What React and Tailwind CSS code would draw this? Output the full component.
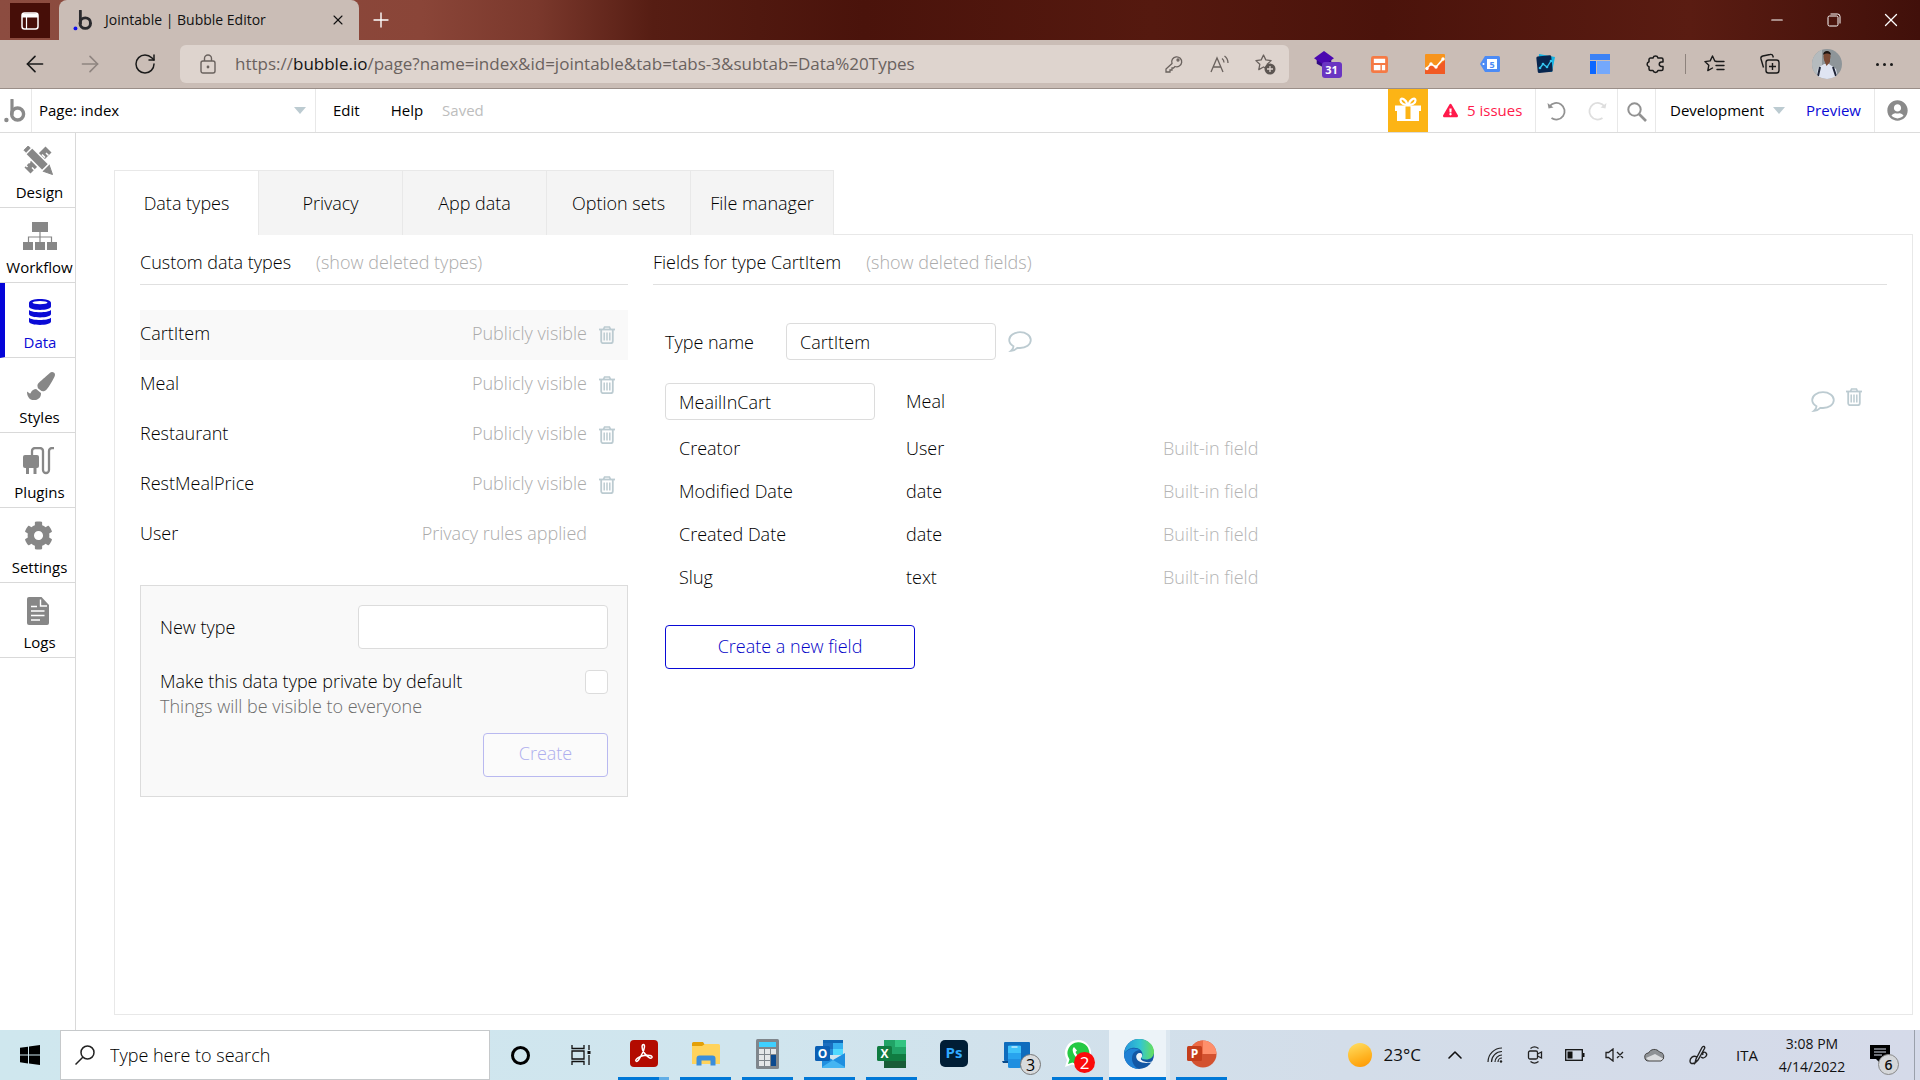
import React from "react";
import { FaCog, FaPaintBrush, FaUserCircle, FaExclamationTriangle } from "react-icons/fa";
import { ArrowLeft, ArrowRight, RotateCw, X, Plus, Minus, ChevronUp } from "lucide-react";

function BubbleMark({ className, dot }) {
  return (
    <svg viewBox="0 0 22 24" className={className} aria-hidden="true">
      <path d="M8 1v14" stroke="currentColor" strokeWidth="3.2" fill="none" strokeLinecap="round" />
      <circle cx="13.6" cy="15" r="6" stroke="currentColor" strokeWidth="3.4" fill="none" />
      <circle cx="2.4" cy="21" r="2.2" fill={dot} />
    </svg>
  );
}

function Caret() {
  return (
    <svg viewBox="0 0 12 7" className="pointer-events-none h-[7px] w-3 shrink-0 fill-[#bccbd1]" aria-hidden="true">
      <path d="M0 0h12L6 7z" />
    </svg>
  );
}

function TrashIcon({ className = "h-[18px] w-4" }) {
  return (
    <svg viewBox="0 0 16 18" className={className} fill="none" stroke="#bccbd1" aria-hidden="true">
      <path d="M0 3.5h16" strokeWidth="1.8" />
      <path d="M4.6 3.2 5.6 1h4.8l1 2.2" strokeWidth="1.7" />
      <path d="M2.2 4v11.2a2 2 0 0 0 2 2h7.6a2 2 0 0 0 2-2V4" strokeWidth="1.8" />
      <path d="M5.2 6.5v8M8 6.5v8M10.8 6.5v8" strokeWidth="1.5" />
    </svg>
  );
}

function CommentIcon() {
  return (
    <svg viewBox="0 0 24 21" className="h-[21px] w-6" fill="none" stroke="#bccbd1" strokeWidth="1.8" aria-hidden="true">
      <path d="M5.5 15.2C2.800 13.800 1.200 11.600 1.200 9.100 1.200 4.700 6 1.200 12 1.200s10.800 3.500 10.800 7.900S18 17 12 17c-1 0-1.900-.1-2.700-.2-1.600 1.700-3.600 2.800-6.200 3 1.400-1.100 2.300-2.500 2.400-4.600z" />
    </svg>
  );
}

/* ---------- Browser frame ---------- */

function TitleBar() {
  return (
    <header className="flex h-10 items-start bg-[linear-gradient(90deg,#8c4c40_0%,#8a4538_22%,#7a382c_28%,#561d13_34%,#4a130b_45%,#55190f_60%,#4b130b_72%,#5a1c12_88%,#41100a_100%)] text-white">
      <button className="mt-[3px] ml-[10px] flex h-[35px] w-10 items-center justify-center bg-[#460e08]" aria-label="Tab actions menu">
        <svg viewBox="0 0 18 18" className="size-[18px]" fill="none" stroke="white" strokeWidth="1.5">
          <rect x="1" y="1" width="16" height="16" rx="2.500" />
          <path d="M1 3.500h16" strokeWidth="4" />
          <path d="M5.500 5v12" strokeWidth="1.200" />
        </svg>
      </button>
      <div className="ml-[9px] flex h-10 w-[300px] items-center rounded-t-lg bg-[#cabdb6] pr-[13px] pl-[14px] text-[#111]">
        <BubbleMark className="h-[21px] w-5 text-[#2a2a2e]" dot="#1010ee" />
        <span className="ml-3 flex-1 text-sm whitespace-nowrap">Jointable | Bubble Editor</span>
        <button aria-label="Close tab"><X className="size-4" strokeWidth={1.600} /></button>
      </div>
      <button className="ml-[10px] flex h-10 items-center" aria-label="New tab"><Plus className="size-6" strokeWidth={1.400} /></button>
      <div className="ml-auto flex h-10">
        <button className="flex w-[57px] items-center justify-center" aria-label="Minimize"><Minus className="size-[18px]" strokeWidth={1.500} /></button>
        <button className="flex w-[57px] items-center justify-center" aria-label="Restore">
          <svg viewBox="0 0 14 14" className="size-[14px]" fill="none" stroke="white"><rect x="1" y="3" width="10" height="10" rx="1.500" /><path d="M3.500 1h7a2.500 2.500 0 0 1 2.500 2.500v7" /></svg>
        </button>
        <button className="mr-px flex w-[57px] items-center justify-center" aria-label="Close"><X className="size-[22px]" strokeWidth={1.400} /></button>
      </div>
    </header>
  );
}

const extensions = [
  ["Calendar", (
    <span className="relative ml-[6px] block h-8 w-7">
      <svg viewBox="0 0 22 20" className="mt-[2px] h-5 w-5"><path d="M3 8h16v6l-7 5-9-5z" fill="#2f0a80" /><path d="M11 0l11 8-11 7.500L0 8z" fill="#4b08b0" /></svg>
      <span className="absolute top-[14px] left-2 flex h-4 w-5 items-center justify-center rounded-[3px] bg-[#6a35c2] text-[11px] font-bold text-white">31</span>
    </span>
  )],
  ["Layout", (
    <svg viewBox="0 0 18 18" className="size-[17px]"><rect width="18" height="18" rx="2.500" fill="#f57a45" /><path d="M3 3h12v4.500H3zM3 9.500h7V15H3zM11.500 9.500H15V15h-3.500z" fill="#fff" /></svg>
  )],
  ["Trends", (
    <svg viewBox="0 0 20 20" className="size-5"><rect width="20" height="20" rx="1" fill="#f7941d" /><path d="M0 16l6-5 5 3 9-8v14H0z" fill="#f15a24" /><path d="M1 15l5-5 5 3 7-8" stroke="#fff" strokeWidth="1.600" fill="none" /><g fill="#fff"><circle cx="2" cy="14.500" r="1.700" /><circle cx="6" cy="10" r="1.700" /><circle cx="11" cy="13" r="1.700" /><circle cx="18" cy="5" r="1.700" /></g></svg>
  )],
  ["Tag assistant", (
    <svg viewBox="0 0 20 16" className="h-4 w-5"><path d="M5 0h13.500A1.500 1.500 0 0 1 20 1.500v13a1.500 1.500 0 0 1-1.500 1.500H5L0 8z" fill="#4c8bf5" /><rect x="7" y="3" width="10" height="10" fill="#fff" /><text x="12" y="11.500" fontSize="9" fontWeight="700" textAnchor="middle" fill="#4c8bf5">5</text><circle cx="3.500" cy="8" r="1" fill="#fff" /></svg>
  )],
  ["Analytics", (
    <svg viewBox="0 0 20 20" className="size-5"><path d="M4 0l16 3-3 15-14-1z" fill="#14b4e4" /><rect x="2" y="2" width="15" height="16.500" rx="1.500" transform="rotate(-6 9 10)" fill="#08264f" /><path d="M5 14l3-4 4 3 4-6" stroke="#35c5f0" strokeWidth="1.300" fill="none" /><g fill="#35c5f0"><circle cx="5" cy="14" r="1.300" /><circle cx="8" cy="10" r="1.300" /><circle cx="12" cy="13" r="1.300" /><circle cx="16" cy="7" r="1.300" /></g></svg>
  )],
  ["Board", (
    <svg viewBox="0 0 20 20" className="size-5"><path d="M0 0h20v6H0z" fill="#3b82f6" /><path d="M0 7h6v13H0z" fill="#0b66ff" /><path d="M7 7h13v13H7z" fill="#74a8fb" /></svg>
  )],
  ["Extensions", (
    <svg viewBox="0 0 20 20" className="size-5" fill="none" stroke="#1a1a1a" strokeWidth="1.500" strokeLinejoin="round"><path d="M5.500 4H8a2.600 2.600 0 0 1 5 0h3.500a1.500 1.500 0 0 1 1.500 1.500V8h-1.500a2 2 0 0 0 0 4.500H18V15a1.500 1.500 0 0 1-1.500 1.500H13a2.600 2.600 0 0 1-5 0H5.500A1.500 1.500 0 0 1 4 15v-2.200a2.600 2.600 0 0 1 0-5V5.500A1.500 1.500 0 0 1 5.500 4z" /></svg>
  )],
];

const star = "M9.500 2l2.300 4.900 5.300.7-3.900 3.700 1 5.300-4.700-2.600-4.700 2.600 1-5.300L1.900 7.600l5.300-.7z";

function Toolbar() {
  return (
    <nav className="flex h-[49px] items-center border-b border-[#9a8e88] bg-[#cabdb6] pr-2 text-[#1a1a1a]" aria-label="Browser toolbar">
      <button className="ml-[22px]" aria-label="Back"><ArrowLeft className="size-[26px]" strokeWidth={1.500} /></button>
      <button className="ml-[29px] text-[#8f8580]" aria-label="Forward"><ArrowRight className="size-[26px]" strokeWidth={1.500} /></button>
      <button className="ml-[30px]" aria-label="Refresh"><RotateCw className="size-6" strokeWidth={1.500} /></button>
      <div className="ml-[23px] flex h-[38px] min-w-0 flex-1 items-center rounded-md bg-[#ded4ce] pr-[13px] pl-5 text-[#6a625e]">
        <svg viewBox="0 0 16 20" className="h-5 w-4 shrink-0" fill="none" stroke="currentColor" strokeWidth="1.400"><rect x="1" y="7" width="14" height="12" rx="2" /><path d="M4.500 7V4.500a3.500 3.500 0 0 1 7 0V7" /><circle cx="8" cy="13" r=".7" fill="currentColor" /></svg>
        <span className="ml-[19px] min-w-0 flex-1 truncate text-[17px]">https://<span className="text-[#111]">bubble.io</span>/page?name=index&amp;id=jointable&amp;tab=tabs-3&amp;subtab=Data%20Types</span>
        <button className="ml-4" aria-label="Saved passwords">
          <svg viewBox="0 0 18 18" className="size-[18px]" fill="none" stroke="currentColor" strokeWidth="1.300"><path d="M7 8.500a5 5 0 1 1 3 3L8.500 13H7v2H5v2H1v-3z" /><circle cx="13" cy="5" r="1" /></svg>
        </button>
        <button className="ml-[27px]" aria-label="Read aloud">
          <svg viewBox="0 0 20 18" className="h-[18px] w-5" fill="none" stroke="currentColor" strokeWidth="1.300"><path d="M1 17L7 3l6 14M3.500 12h7M12 3.500a5 5 0 0 1 2 4M14.500 1a9 9 0 0 1 3.500 7" /></svg>
        </button>
        <button className="ml-6" aria-label="Add to favorites">
          <svg viewBox="0 0 22 22" className="size-[22px]" fill="none" stroke="currentColor" strokeWidth="1.300"><path d={star} strokeLinejoin="round" /><circle cx="16" cy="16" r="5.500" fill="#5d5652" stroke="none" /><path d="M16 13v6M13 16h6" stroke="#ded4ce" /></svg>
        </button>
      </div>
      <div className="ml-2 flex items-center">
        {extensions.map(([name, icon]) => (
          <button key={name} className="flex w-[55px] items-center justify-center" aria-label={name}>{icon}</button>
        ))}
        <span className="ml-[3px] h-5 w-px bg-[#8d827c]" />
        <button className="flex w-14 items-center justify-center" aria-label="Favorites">
          <svg viewBox="0 0 22 20" className="h-5 w-[22px]" fill="none" stroke="currentColor" strokeWidth="1.400" strokeLinejoin="round" strokeLinecap="round"><path d="M13.500 7.500L11.800 7 9.500 2 7.200 6.900l-5.300.7 3.900 3.700-1 5.300 4.700-2.600M14 7.500h7M13 11.500h8M14 15.500h7" /></svg>
        </button>
        <button className="flex w-14 items-center justify-center" aria-label="Collections">
          <svg viewBox="0 0 22 22" className="size-[22px]" fill="none" stroke="currentColor" strokeWidth="1.400"><rect x="7" y="7" width="13" height="13" rx="2.500" /><path d="M13.500 10v7M10 13.500h7M4.500 14.500L2 6a2.500 2.500 0 0 1 1.800-3L11 1.500a2.500 2.500 0 0 1 3 1.800l.3 1.200" /></svg>
        </button>
        <button className="flex w-[58px] items-center justify-center" aria-label="Profile">
          <svg viewBox="0 0 30 30" className="size-[30px]">
            <clipPath id="avatar"><circle cx="15" cy="15" r="15" /></clipPath>
            <g clipPath="url(#avatar)">
              <rect width="30" height="30" fill="#8e9599" /><path d="M0 0h10v30H0z" fill="#b5bbbe" />
              <path d="M4 30l2-11 6-4h5l7 5 2 10z" fill="#dfe4f2" />
              <path d="M12 11l2.500 6 3.500-4v-4h-6z" fill="#7a4a35" /><ellipse cx="15" cy="7.500" rx="3.500" ry="5" fill="#7a4a35" />
              <path d="M11 6c0-5.500 8-5.500 8 0-2-2-6-2-8 0z" fill="#1d1512" />
              <path d="M8 18l-2 9M21 18l3 9" stroke="#1f2537" strokeWidth="2" />
            </g>
          </svg>
        </button>
        <button className="flex w-14 items-center justify-center gap-1" aria-label="Settings and more">
          <span className="size-[3px] rounded-full bg-[#1a1a1a]" /><span className="size-[3px] rounded-full bg-[#1a1a1a]" /><span className="size-[3px] rounded-full bg-[#1a1a1a]" />
        </button>
      </div>
    </nav>
  );
}

/* ---------- Editor ---------- */

function EditorBar() {
  return (
    <div className="flex h-11 items-stretch border-b border-[#dcdcdc] bg-white text-[15px] text-black">
      <a href="#home" className="flex w-8 items-center border-r border-[#e8e8e8] pl-1" aria-label="Bubble home">
        <BubbleMark className="h-6 w-[22px] text-[#8a8a8a]" dot="#8a8a8a" />
      </a>
      <div className="flex w-[284px] items-center border-r border-[#e8e8e8] pr-[9px] pl-[7px]">
        <select aria-label="Page" className="h-full flex-1 appearance-none bg-transparent"><option>Page: index</option></select>
        <Caret />
      </div>
      <button className="ml-[17px]">Edit</button>
      <button className="ml-[31px]">Help</button>
      <span className="ml-[19px] flex items-center text-[#bdbdbd]">Saved</span>
      <div className="ml-auto flex items-stretch">
        <button className="flex w-10 items-center justify-center bg-[#fcb415]" aria-label="Gift">
          <svg viewBox="0 0 26 24" className="mb-[3px] h-6 w-[26px]" fill="white">
            <path d="M0 8.500h26V14H0zM2 14h22v10H2z" />
            <path d="M12.500 8C11 2 5.500-.5 5.500 3.500c0 3 4 4.500 7 4.500zM13.500 8c1.500-6 7-8.500 7-4.500 0 3-4 4.500-7 4.500z" fill="none" stroke="white" strokeWidth="2.200" />
            <path d="M10.500 9.500h5V22h-5z" fill="#fcb415" />
          </svg>
        </button>
        <button className="flex w-[108px] items-center gap-[9px] border-r border-[#e8e8e8] pl-[15px] whitespace-nowrap text-[#ff1a4b]">
          <FaExclamationTriangle className="size-[15px]" />5 issues
        </button>
        <div className="flex w-[82px] items-center justify-between border-r border-[#e8e8e8] pr-[10px] pl-[11px]">
          <button aria-label="Undo">
            <svg viewBox="0 0 20 20" className="size-5" fill="none" stroke="#929292" strokeWidth="1.800"><path d="M2.500 5.500A8.300 8.300 0 1 1 4.500 17" /><path d="M.5 2l1 5.500 5-1z" fill="#929292" stroke="none" /></svg>
          </button>
          <button aria-label="Redo">
            <svg viewBox="0 0 20 20" className="size-5" fill="none" stroke="#dedede" strokeWidth="1.800"><path d="M17.500 5.500A8.300 8.300 0 1 0 15.500 17" /><path d="M19.500 2l-1 5.500-5-1z" fill="#dedede" stroke="none" /></svg>
          </button>
        </div>
        <button className="flex w-[38px] items-center justify-center border-r border-[#e8e8e8]" aria-label="Search">
          <svg viewBox="0 0 20 20" className="mt-[3px] ml-px size-5" fill="none" stroke="#929292"><circle cx="7.500" cy="7.500" r="6.200" strokeWidth="2" /><path d="M12 12l7 7" strokeWidth="2.600" /></svg>
        </button>
        <div className="flex items-center gap-1 pl-[14px]">
          <select aria-label="Version" className="h-full w-[99px] appearance-none bg-transparent"><option>Development</option></select>
          <Caret />
        </div>
        <a href="#preview" className="flex w-[90px] items-center justify-end border-r border-[#e8e8e8] pr-[13px] text-[#0a0ad6]">Preview</a>
        <button className="flex w-[45px] items-center justify-center pr-px" aria-label="Account"><FaUserCircle className="size-[21px] text-[#8a8a8a]" /></button>
      </div>
    </div>
  );
}

const sections = [
  ["Design", (
    <svg viewBox="0 0 30 30" className="mr-[3px] size-[30px]">
      <path d="M4.500 25.500l21-21" stroke="currentColor" strokeWidth="8.500" />
      <path d="M1 18.500l3.500 3.500M5 16l2 2M11.500 25l-2.500-2.500M22 12.500l-3-3M25.500 10.500L23 8" stroke="white" strokeWidth="1.500" />
      <path d="M3.500 3.500L22 22" stroke="white" strokeWidth="11" />
      <path d="M5.500 5.500L22 22" stroke="currentColor" strokeWidth="8" />
      <path d="M1 5.200L5.200 1l2 2L3 7.200zM26 19.500l3.500 10-10-3.500z" fill="currentColor" stroke="currentColor" strokeWidth="1" />
      <path d="M2.500 9.500l7-7M18.500 26.500l8-8" stroke="white" strokeWidth="1.200" />
    </svg>
  )],
  ["Workflow", (
    <svg viewBox="0 0 34 28" className="h-7 w-[34px]" fill="currentColor"><path d="M9 0h16v10H9zM0 20h10v8H0zM12 20h10v8H12zM24 20h10v8H24z" /><path d="M17 10v10M5.500 20v-5h23v5" fill="none" stroke="currentColor" strokeWidth="1.200" /></svg>
  )],
  ["Data", (
    <svg viewBox="0 0 22 26" className="h-[26px] w-[22px]" fill="currentColor">
      <path d="M0 4c0-5.300 22-5.300 22 0v3.500c0 4.500-22 4.500-22 0z" /><ellipse cx="11" cy="3.600" rx="7.500" ry="1.700" fill="white" />
      <path d="M0 11c3 3 19 3 22 0v4c0 4.500-22 4.500-22 0zM0 18.700c3 3 19 3 22 0v3.800c0 4.500-22 4.500-22 0z" />
    </svg>
  )],
  ["Styles", <FaPaintBrush className="ml-[2px] size-7" />],
  ["Plugins", (
    <svg viewBox="0 0 32 28" className="mr-[2px] h-7 w-8" fill="currentColor"><rect y="8" width="16" height="13" rx="2" /><path d="M3 20h3v7H3zM10.500 20h3v7h-3z" /><path d="M9 9V4a3 3 0 0 1 3-3h5a3 3 0 0 1 3 3v19a3 3 0 0 0 6 0V4a3 3 0 0 1 3-3h2" fill="none" stroke="currentColor" strokeWidth="2.300" /></svg>
  )],
  ["Settings", <FaCog className="mr-[2px] size-[29px]" />],
  ["Logs", (
    <svg viewBox="0 0 22 28" className="mr-1 h-7 w-[22px]"><path d="M2 0h12.500L22 8v18a2 2 0 0 1-2 2H2a2 2 0 0 1-2-2V2a2 2 0 0 1 2-2z" fill="currentColor" /><path d="M13.500 2.500V9H20M4 9.500h6M4 14h13.500M4 18.500h13.500M4 23h9" stroke="white" strokeWidth="1.400" fill="none" /></svg>
  )],
];

function Sidebar() {
  return (
    <nav className="w-[76px] shrink-0 border-r border-[#d9d9d9] bg-white" aria-label="Editor sections">
      {sections.map(([name, icon]) => {
        const active = name === "Data";
        return (
          <a key={name} href={"#" + name.toLowerCase()} className={"flex h-[75px] flex-col items-center border-b border-[#d9d9d9] " + (active ? "border-l-[5px] border-l-[#0404d8] text-[#0a0ad6]" : "pl-1 text-[#878787]")}>
            <span className="flex h-[47px] items-end justify-center pb-[5px]">{icon}</span>
            <span className={"text-[15px] leading-6 " + (active ? "" : "text-black")}>{name}</span>
          </a>
        );
      })}
    </nav>
  );
}

const tabs = ["Data types", "Privacy", "App data", "Option sets", "File manager"];
const types = [
  ["CartItem", "Publicly visible"],
  ["Meal", "Publicly visible"],
  ["Restaurant", "Publicly visible"],
  ["RestMealPrice", "Publicly visible"],
  ["User", "Privacy rules applied"],
];
const builtIn = [["Creator", "User"], ["Modified Date", "date"], ["Created Date", "date"], ["Slug", "text"]];

function TypesColumn() {
  return (
    <section className="w-[488px] shrink-0">
      <div className="flex h-[50px] items-center gap-[25px] border-b border-[#e0e0e0] pt-[6px]">
        <h2>Custom data types</h2>
        <button className="text-[#ababab]">(show deleted types)</button>
      </div>
      <ul className="mt-[25px]">
        {types.map(([name, status], i) => (
          <li key={name} className={"flex h-[50px] items-center pr-[13px] " + (i === 0 ? "bg-[#f9f9f9]" : "")}>
            <button className="flex-1 pb-1 text-left">{name}</button>
            <span className="pb-1 text-[#ababab]">{status}</span>
            {i < 4 ? <button className="ml-3" aria-label={"Delete " + name}><TrashIcon /></button> : <span className="ml-3 w-4" />}
          </li>
        ))}
      </ul>
      <form className="mt-[25px] border border-[#dcdcdc] bg-[#f9f9f9] p-[19px]">
        <div className="flex items-center justify-between">
          <label htmlFor="new-type">New type</label>
          <input id="new-type" type="text" className="h-11 w-[250px] rounded border border-[#dcdcdc] bg-white px-3" />
        </div>
        <div className="mt-5 flex items-start justify-between leading-[25px]">
          <div>
            <label htmlFor="private" className="block">Make this data type private by default</label>
            <p className="text-[#6c6c6c]">Things will be visible to everyone</p>
          </div>
          <input id="private" type="checkbox" className="mt-px h-6 w-[23px] appearance-none rounded border border-[#dcdcdc] bg-white" />
        </div>
        <div className="mt-[14px] flex justify-end">
          <button type="button" disabled className="h-11 w-[125px] rounded border border-[#b9b9f0] bg-[#fbfbfb] pb-[3px] text-[#aeaeee]">Create</button>
        </div>
      </form>
    </section>
  );
}

function FieldsColumn() {
  return (
    <section className="min-w-0 flex-1">
      <div className="flex h-[50px] items-center gap-[25px] border-b border-[#e0e0e0] pt-[6px]">
        <h2>Fields for type CartItem</h2>
        <button className="text-[#ababab]">(show deleted fields)</button>
      </div>
      <div className="pt-[38px] pr-[25px] pl-3">
        <div className="flex items-center">
          <label htmlFor="type-name" className="w-[121px] pt-px">Type name</label>
          <input id="type-name" type="text" defaultValue="CartItem" className="h-[37px] w-[210px] rounded border border-[#dcdcdc] px-[13px]" />
          <button className="ml-3" aria-label="Comment on type"><CommentIcon /></button>
        </div>
        <table className="mt-[23px] w-full table-fixed text-left">
          <tbody>
            <tr className="h-11 align-top">
              <td className="w-[241px]"><input type="text" aria-label="Field name" defaultValue="MeailInCart" className="h-[37px] w-[210px] rounded border border-[#dcdcdc] px-[13px]" /></td>
              <td className="w-[257px] pt-[5px]">Meal</td>
              <td>
                <div className="flex justify-end gap-[11px] pt-[5px]">
                  <button className="pt-[3px]" aria-label="Comment on field"><CommentIcon /></button>
                  <button className="pb-[6px]" aria-label="Delete field"><TrashIcon /></button>
                </div>
              </td>
            </tr>
            {builtIn.map(([name, type]) => (
              <tr key={name} className="h-[43px]">
                <td className="pl-[14px]">{name}</td>
                <td>{type}</td>
                <td className="text-[#b4b4b4]">Built-in field</td>
              </tr>
            ))}
          </tbody>
        </table>
        <button className="mt-[26px] h-11 w-[250px] rounded border border-[#0a0ad6] pb-[2px] text-[#0404c8]">Create a new field</button>
      </div>
    </section>
  );
}

function DataPanel() {
  return (
    <main className="flex min-w-0 flex-1 flex-col bg-white pt-[37px] pr-[7px] pb-[15px] pl-[38px] text-[18px] font-light text-black">
      <div className="flex h-[65px]">
        {tabs.map((tab, i) => (
          <button key={tab} className={"w-[144px] border-t border-l border-[#e8e8e8] whitespace-nowrap last-of-type:border-r " + (i === 0 ? "bg-white" : "bg-[#f4f4f4]")}>{tab}</button>
        ))}
        <div className="flex-1 border-b border-[#e8e8e8]" />
      </div>
      <div className="flex flex-1 gap-[25px] border-r border-b border-l border-[#e8e8e8] px-[25px]">
        <TypesColumn />
        <FieldsColumn />
      </div>
    </main>
  );
}

/* ---------- Taskbar ---------- */

function OfficeTile({ letter, color }) {
  return (
    <g>
      <rect y="6" width="15" height="15" rx="1.500" fill={color} />
      <text x="7.500" y="18" fontSize="12" fontWeight="700" textAnchor="middle" fill="#fff">{letter}</text>
    </g>
  );
}

const apps = [
  { name: "Acrobat", line: "split", icon: (
    <svg viewBox="0 0 28 28" className="size-7"><rect width="28" height="27" rx="4" fill="#b30b00" /><path d="M6 21c-1.500-1.500 4-5 8-5.500s9 0 8 2-5-.500-8-5-2-8-.5-8 1.500 4-1.500 9.500S7.500 22.500 6 21z" fill="none" stroke="#fff" strokeWidth="1.500" /></svg>
  ) },
  { name: "File Explorer", line: "full", icon: (
    <svg viewBox="0 0 28 24" className="h-6 w-7"><path d="M0 1.500A1.500 1.500 0 0 1 1.500 0H11l2 3v4H0z" fill="#e3a008" /><path d="M0 4h10l3-2h13.500A1.500 1.500 0 0 1 28 3.500V22H0z" fill="#ffd35c" /><path d="M4.500 23.500v-7a3 3 0 0 1 3-3h13a3 3 0 0 1 3 3v7h-5v-5h-9v5z" fill="#3b8edb" /></svg>
  ) },
  { name: "Calculator", line: "full", icon: (
    <svg viewBox="0 0 23 30" className="h-[30px] w-[23px]"><rect width="23" height="30" rx="1.500" fill="#7f868c" /><path d="M3 3h17v5H3z" fill="#3fd0ff" /><path d="M3 10h5v5H3zM9 10h5v5H9zM15 10h5v5h-5zM3 16h5v5H3zM9 16h5v5H9zM3 22h5v5H3zM9 22h5v5H9z" fill="#e4e7e9" /><path d="M15 16h5v11h-5z" fill="#0b4a8f" /></svg>
  ) },
  { name: "Outlook", line: "full", icon: (
    <svg viewBox="0 0 30 28" className="h-7 w-[30px]"><path d="M8 0h20v14H8z" fill="#1066b5" /><path d="M8 3h10v6H8z" fill="#1b6fc0" /><path d="M18 3h10v6H18z" fill="#35b0f0" /><path d="M18 9h10v6H18z" fill="#50d9ff" /><path d="M8 9h10v6H8z" fill="#2489d8" /><path d="M7 14l11 6 12-7v14a1 1 0 0 1-1 1H8a1 1 0 0 1-1-1z" fill="#1f8fe0" /><path d="M7 27l11-7 12 7-1 1H8z" fill="#45b5f2" /><OfficeTile letter="O" color="#0a5fb4" /></svg>
  ) },
  { name: "Excel", line: "full", icon: (
    <svg viewBox="0 0 30 28" className="h-7 w-[30px]"><path d="M7 0h12v28H7z" fill="#21a366" /><path d="M18 0h11v7H18z" fill="#33c481" /><path d="M18 7h11v7H18z" fill="#21a366" /><path d="M7 14h22v7H7z" fill="#107c41" /><path d="M7 21h22v7H7z" fill="#185c37" /><OfficeTile letter="X" color="#107c41" /></svg>
  ) },
  { name: "Photoshop", line: "none", icon: (
    <svg viewBox="0 0 28 28" className="size-7"><rect width="28" height="27" rx="5" fill="#001e36" /><text x="14" y="18" fontSize="15" fontWeight="700" textAnchor="middle" fill="#31a8ff">Ps</text></svg>
  ) },
  { name: "Your Phone", line: "none", badge: "3", icon: (
    <svg viewBox="0 0 28 28" className="size-7"><rect x="2" y="2" width="26" height="19" rx="1" fill="#0f6cbd" /><path d="M0 21h22v2H1z" fill="#0a4a8a" /><rect x="6" y="5" width="13" height="23" rx="1.500" fill="#1f8fe0" /><path d="M6 6h13v7H6z" fill="#3fc3fa" /><path d="M6 13h13v6H6z" fill="#28a3ee" /><path d="M9.500 7h6" stroke="#fff" /></svg>
  ) },
  { name: "WhatsApp", line: "full", badge: "2", icon: (
    <svg viewBox="0 0 28 28" className="size-7"><path d="M14 0a13 13 0 1 1-6 24.500L1 27l2-7A13 13 0 0 1 14 0z" fill="#fff" /><path d="M14 2.200a11 11 0 1 1-5.500 20.300L4 24l1.500-4.500A11 11 0 0 1 14 2.200z" fill="#25c943" /><path d="M10 7c-4 3 2 13 8 13l3-3-4-2.500-2 1.500c-2-1-3-2.500-3.500-4l1.500-1.500z" fill="#fff" /></svg>
  ) },
  { name: "Microsoft Edge", line: "active", icon: (
    <svg viewBox="0 0 30 30" className="ml-[3px] size-[30px]">
      <defs><linearGradient id="edgeTop" x1="0" x2="1"><stop offset="0" stopColor="#2496dc" /><stop offset=".55" stopColor="#34c6cf" /><stop offset="1" stopColor="#66e05a" /></linearGradient></defs>
      <circle cx="15" cy="15" r="15" fill="#1257a4" />
      <path d="M0 15C1 6 7 0 15 0c9 0 15 6 15 13 0 5-4 7.500-8 7.500-3 0-5-1-4.500-2 1.500-2 1.500-5-1-7.500C12 7 4 8 0 15z" fill="url(#edgeTop)" />
      <path d="M0 15c4-6 12-7 16.500-3.500-5-1-8.500 3-8.500 8 0 5 3 9 7 10.500C6 30 0 23 0 15z" fill="#1f80d4" />
      <path d="M30 21.500c-4 2.500-9.500 2-12.500-.5-1.200-1-.5-1.800.3-3 .8-1.600.2-3.500-1.300-4-2.500-.6-4.500 1.500-4.300 4 .5 4.500 6 7 15.300 5.500z" fill="#edf3f8" />
    </svg>
  ) },
  { name: "PowerPoint", line: "full", icon: (
    <svg viewBox="0 0 30 28" className="h-7 w-[30px]"><circle cx="16" cy="14" r="13.500" fill="#d35230" /><path d="M16 .5V14h13.500A13.500 13.500 0 0 0 16 .5z" fill="#ff8f6b" /><path d="M16 .5A13.500 13.500 0 0 0 2.500 14H16z" fill="#ed6c47" /><OfficeTile letter="P" color="#c43e1c" /></svg>
  ) },
];

function AppSlot({ app }) {
  const active = app.line === "active";
  return (
    <button aria-label={app.name} className={"relative flex h-full items-center justify-center " + (active ? "-mx-[5px] w-[61px] border-r-4 border-[#dce7f0] bg-[#ecf3f8]" : "w-[51px]")}>
      <span className="pb-[2px]">{app.icon}</span>
      {app.badge === "3" && <span className="absolute top-6 left-[30px] flex size-[21px] items-center justify-center rounded-full border border-[#777] bg-[#d8dadc] text-base text-black">3</span>}
      {app.badge === "2" && <span className="absolute top-[22px] left-[22px] flex size-[21px] items-center justify-center rounded-full bg-[#fb0a0a] text-[17px] text-white">2</span>}
      {app.line !== "none" && (
        <span className="absolute inset-x-0 bottom-0 flex h-[3px]">
          <span className="flex-1 bg-[#0078d7]" />
          {app.line === "split" && <span className="w-[10px] bg-[#62aee6]" />}
        </span>
      )}
    </button>
  );
}

const tray = [
  ["Network", <svg viewBox="0 0 16 16" className="size-4" fill="none" stroke="#222" strokeWidth="1.200"><path d="M1 15A14 14 0 0 1 15 1M4.500 15A10.500 10.500 0 0 1 15 4.500M8 15a7 7 0 0 1 7-7M11 15a4 4 0 0 1 4-4" /><circle cx="14" cy="14.500" r="1.200" fill="#222" stroke="none" /></svg>],
  ["Meet Now", <svg viewBox="0 0 16 18" className="h-[18px] w-4" fill="none" stroke="#222" strokeWidth="1.300"><rect x="1.500" y="5" width="9" height="8" rx="1.500" /><path d="M10.500 8l4-2v6l-4-2M3.500 2.500C6 .5 9 .5 11.500 2.500M3.500 15.500c2.500 2 5.500 2 8 0" /></svg>],
  ["Battery", <svg viewBox="0 0 20 12" className="h-3 w-5"><rect x=".7" y=".7" width="16.600" height="10.600" fill="none" stroke="#111" strokeWidth="1.300" /><path d="M2.500 2.500h5v7h-5zM18 4h1.500v4H18z" fill="#111" /></svg>],
  ["Volume", <svg viewBox="0 0 20 14" className="h-[14px] w-5" fill="none" stroke="#222" strokeWidth="1.300"><path d="M1 4.500h2.500L8 1v12L3.500 9.500H1zM12 4l6 6M18 4l-6 6" /></svg>],
  ["OneDrive", <svg viewBox="0 0 22 14" className="h-[14px] w-[22px]"><path d="M5 13a4 4 0 0 1-.5-8 6.500 6.500 0 0 1 11-1A5 5 0 0 1 17 13z" fill="#8f9296" /><path d="M5 13l-3-3 9-4 9 5-3 2z" fill="#dcdde0" /><path d="M5 13a4 4 0 0 1-.5-8 6.500 6.500 0 0 1 11-1A4.700 4.700 0 0 1 17 13z" fill="none" stroke="#444" /></svg>],
];

function Taskbar() {
  return (
    <footer className="flex h-[50px] items-stretch bg-[linear-gradient(90deg,#cfe7ee_0%,#d0e5ee_40%,#d3dde9_70%,#d5dae9_100%)] text-[#111]">
      <button className="flex w-[60px] items-center justify-center" aria-label="Start">
        <svg viewBox="0 0 20 20" className="size-5"><path d="M0 2.800L8 1.700v7.900H0zM9 1.500L20 0v9.600H9zM0 10.500h8v7.900l-8-1.200zM9 10.500h11V20L9 18.500z" /></svg>
      </button>
      <div className="flex w-[430px] items-center border border-[#c6c9cb] bg-white pl-[14px]">
        <svg viewBox="0 0 20 20" className="size-5" fill="none" stroke="#222" strokeWidth="1.500"><circle cx="12.500" cy="7.500" r="6.500" /><path d="M8 12l-7.500 7.500" /></svg>
        <input type="search" aria-label="Search" placeholder="Type here to search" className="ml-[15px] h-full min-w-0 flex-1 bg-transparent text-[18px] font-light outline-none placeholder:text-black" />
      </div>
      <button className="flex w-[60px] items-center justify-center" aria-label="Cortana"><span className="size-[19px] rounded-full border-[3px] border-black" /></button>
      <button className="mr-[6px] flex w-[62px] items-center justify-center" aria-label="Task View">
        <svg viewBox="0 0 20 20" className="size-5" fill="none" stroke="#111" strokeWidth="1.300"><path d="M1 0v3.500h12V0M1 20v-3.500h12V20M1 6h12v8H1zM18 0v5M18 10v10" /><path d="M16.500 6h3v3h-3z" fill="#111" stroke="none" /></svg>
      </button>
      <div className="flex gap-[11px]">{apps.map((app) => <AppSlot key={app.name} app={app} />)}</div>
      <div className="ml-auto flex items-stretch">
        <button className="flex items-center gap-3 pr-[14px] text-[17px]">
          <span className="size-6 rounded-full bg-[linear-gradient(160deg,#ffe066,#ffb321_60%,#ff9500)]" />23°C
        </button>
        <button className="flex w-10 items-center justify-center" aria-label="Show hidden icons"><ChevronUp className="size-6" strokeWidth={1.600} /></button>
        {tray.map(([name, icon]) => <button key={name} className="flex w-10 items-center justify-center" aria-label={name}>{icon}</button>)}
        <button className="flex w-12 items-center justify-center" aria-label="Pen">
          <svg viewBox="0 0 20 20" className="size-5" fill="none" stroke="#222" strokeWidth="1.400"><path d="M7 14L13 2.500c1-2 3.500-1 2.500 1L9 15l-3 3zM8 12c-4-2-7 1-7 4 0 4 6 3 6-1M12 12c3 3 7-2 5-4s-4 0-3 2" /></svg>
        </button>
        <button className="w-12 text-[15px]">ITA</button>
        <div className="flex w-[82px] flex-col items-center justify-center text-sm leading-[23px]"><span>3:08 PM</span><span>4/14/2022</span></div>
        <button className="relative flex w-14 justify-center pt-[15px]" aria-label="Notifications">
          <svg viewBox="0 0 20 20" className="-ml-[3px] size-5"><path d="M0 0h20v14H10v4l-4-4H0z" /><path d="M4 4h12M4 7h12M4 10h8" stroke="#d5dbe9" strokeWidth="1.200" /></svg>
          <span className="absolute top-6 left-[25px] flex size-[21px] items-center justify-center rounded-full border border-[#888] bg-[#d5d7da] text-sm font-semibold">6</span>
        </button>
        <span className="mr-[5px] ml-[5px] w-px bg-[#9aa0ab]" />
      </div>
    </footer>
  );
}

export default function App() {
  return (
    <div className="flex min-h-screen flex-col bg-white font-['Open_Sans','Noto_Sans',sans-serif]">
      <TitleBar />
      <Toolbar />
      <EditorBar />
      <div className="flex flex-1">
        <Sidebar />
        <DataPanel />
      </div>
      <Taskbar />
    </div>
  );
}
